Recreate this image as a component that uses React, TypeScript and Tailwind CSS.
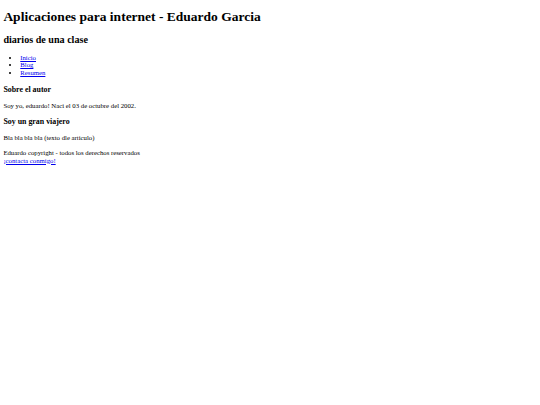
import React from 'react';

const serif = { fontFamily: '"Liberation Serif", "Times New Roman", serif' };

export default function App() {
  return (
    <div className="min-h-[405px] bg-white text-black px-[3.375px] pt-[9.05px] leading-[1.15]" style={serif}>
      <h1 className="text-[13.5px] font-bold mb-[9.05px]">Aplicaciones para internet - Eduardo Garcia</h1>
      <h2 className="text-[10.125px] font-bold mb-[8.4px]">diarios de una clase</h2>
      <ul className="list-disc pl-[16.875px] text-[6.75px] mb-[7.9px]">
        <li><a href="#" className="text-[#0000ee] underline">Inicio</a></li>
        <li><a href="#" className="text-[#0000ee] underline">Blog</a></li>
        <li><a href="#" className="text-[#0000ee] underline">Resumen</a></li>
      </ul>
      <h3 className="text-[7.9px] font-bold mb-[7.9px]">Sobre el autor</h3>
      <p className="text-[6.75px] mb-[7.9px]">Soy yo, eduardo! Naci el 03 de octubre del 2002.</p>
      <h3 className="text-[7.9px] font-bold mb-[7.9px]">Soy un gran viajero</h3>
      <p className="text-[6.75px] mb-[6.75px]">Bla bla bla bla (texto dle articulo)</p>
      <p className="text-[6.75px]">
        Eduardo copyright - todos los derechos reservados
        <br />
        <a href="#" className="text-[#0000ee] underline">¡contacta conmigo!</a>
      </p>
    </div>
  );
}
